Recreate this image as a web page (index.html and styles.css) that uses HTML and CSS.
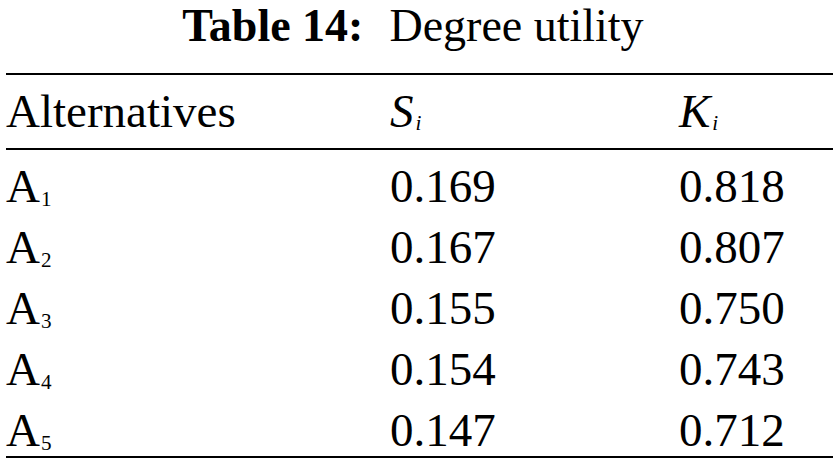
FILE: index.html
```html
<!DOCTYPE html>
<html>
<head>
<meta charset="utf-8">
<link rel="stylesheet" href="styles.css">
</head>
<body>
<div class="page">
  <div class="caption"><b>Table 14:</b><span class="gap"></span>Degree utility</div>
  <div class="table">
    <div class="row head">
      <div class="cell">Alternatives</div>
      <div class="cell"><i>S</i><sub class="isub">i</sub></div>
      <div class="cell"><i>K</i><sub class="isub">i</sub></div>
    </div>
    <div class="body">
      <div class="row"><div class="cell">A<sub>1</sub></div><div class="cell">0.169</div><div class="cell">0.818</div></div>
      <div class="row"><div class="cell">A<sub>2</sub></div><div class="cell">0.167</div><div class="cell">0.807</div></div>
      <div class="row"><div class="cell">A<sub>3</sub></div><div class="cell">0.155</div><div class="cell">0.750</div></div>
      <div class="row"><div class="cell">A<sub>4</sub></div><div class="cell">0.154</div><div class="cell">0.743</div></div>
      <div class="row"><div class="cell">A<sub>5</sub></div><div class="cell">0.147</div><div class="cell">0.712</div></div>
    </div>
  </div>
</div>
</body>
</html>
```

FILE: styles.css
```css
html, body {
  margin: 0;
  padding: 0;
  background: #ffffff;
}

.page {
  width: 837px;
  font-family: "Liberation Serif", "Times New Roman", Times, serif;
  font-size: 47px;
  color: #000000;
}

.caption {
  font-size: 46px;
  text-align: center;
  line-height: 51px;
  white-space: nowrap;
  padding-right: 11px;
}

.caption b {
  font-weight: bold;
}

.gap {
  display: inline-block;
  width: 26px;
}

.table {
  margin: 22px 4px 0 6px;
  border-top: 2.5px solid #000;
  border-bottom: 2.5px solid #000;
}

.row {
  display: grid;
  grid-template-columns: 384px 289px 1fr;
  line-height: 52px;
  padding-top: 9px;
}

.row.head {
  padding-top: 10px;
  padding-bottom: 11px;
  border-bottom: 2.5px solid #000;
}

.body {
  padding-top: 1px;
}

.cell {
  white-space: nowrap;
}

sub {
  font-size: 0.45em;
  line-height: 0;
  vertical-align: -0.17em;
  margin-left: 1px;
}

.isub {
  font-style: italic;
  margin-left: 2px;
  vertical-align: -0.13em;
}
```
